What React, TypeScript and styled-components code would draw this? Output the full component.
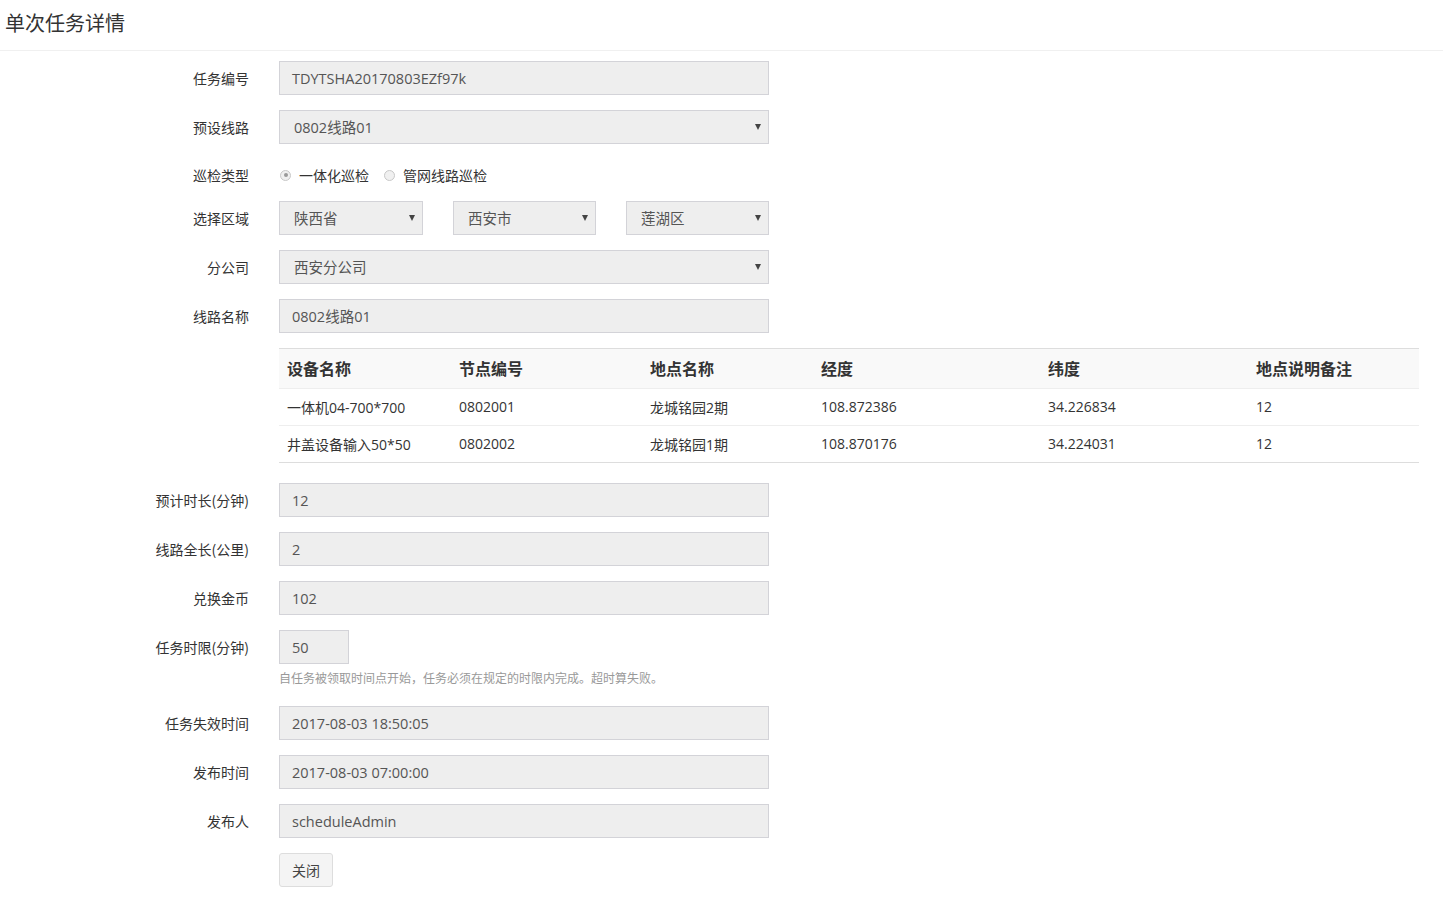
import React from "react";
import styled, { createGlobalStyle } from "styled-components";

const GlobalStyle = createGlobalStyle`
  html, body { margin: 0; padding: 0; background: #fff; }
  body {
    font-family: "Open Sans", "Noto Sans CJK SC", sans-serif;
    color: #333;
    font-size: 14px;
  }
`;

const Page = styled.div`
  width: 1443px;
  min-height: 902px;
`;

const Header = styled.div`
  height: 51px;
  display: flex;
  align-items: center;
  padding: 0 5px 6px;
  box-sizing: border-box;
  border-bottom: 1px solid #f0f0f0;
`;

const Title = styled.h1`
  margin: 0;
  font-size: 20px;
  font-weight: 400;
  color: #333;
  font-family: "Noto Sans CJK SC", sans-serif;
`;

const Form = styled.div`
  padding: 10px 24px 20px 0;
`;

const Row = styled.div<{ $mb?: number }>`
  display: grid;
  grid-template-columns: 249px 1fr;
  column-gap: 30px;
  margin-bottom: ${(p) => p.$mb ?? 15}px;
  align-items: start;
`;

const Label = styled.div<{ $h?: number }>`
  text-align: right;
  height: ${(p) => p.$h ?? 34}px;
  line-height: ${(p) => p.$h ?? 34}px;
  font-size: 14px;
  color: #333;
  font-family: "Noto Sans CJK SC", sans-serif;
`;

const Field = styled.div<{ $w?: number }>`
  width: ${(p) => p.$w ?? 490}px;
  height: 34px;
  box-sizing: border-box;
  background: #eee;
  border: 1px solid #d3d3d8;
  padding: 0 12px;
  line-height: 33px;
  color: #555;
  font-size: 14.5px;
  font-family: "Open Sans", "Noto Sans CJK SC", sans-serif;
  white-space: nowrap;
`;

const Select = styled(Field)`
  position: relative;
  padding-left: 14px;
  &::after {
    content: "";
    position: absolute;
    right: 7px;
    top: 13px;
    border-left: 3px solid transparent;
    border-right: 3px solid transparent;
    border-top: 6px solid #444;
  }
`;

const SelectGroup = styled.div`
  display: flex;
  gap: 30px;
  width: 490px;
`;

const RadioGroup = styled.div`
  display: flex;
  align-items: center;
  height: 32px;
  font-family: "Noto Sans CJK SC", sans-serif;
  font-size: 14px;
  color: #333;
`;

const RadioItem = styled.label`
  display: flex;
  align-items: center;
  margin-right: 14px;
`;

const RadioDot = styled.span<{ $checked?: boolean }>`
  width: 11px;
  height: 11px;
  border-radius: 50%;
  box-sizing: border-box;
  border: 1px solid #c8c8c8;
  background: #f0f0f0;
  margin: 0 8px 0 1px;
  position: relative;
  &::after {
    content: "";
    display: ${(p) => (p.$checked ? "block" : "none")};
    position: absolute;
    left: 2.5px;
    top: 2.5px;
    width: 4px;
    height: 4px;
    border-radius: 50%;
    background: #9a9a9a;
  }
`;

const Table = styled.table`
  width: 1140px;
  table-layout: fixed;
  border-collapse: collapse;
  border-top: 1px solid #ddd;
  border-bottom: 1px solid #ddd;
  font-family: "Open Sans", "Noto Sans CJK SC", sans-serif;
`;

const Th = styled.th<{ $w: number }>`
  width: ${(p) => p.$w}px;
  box-sizing: border-box;
  text-align: left;
  padding: 0 8px 2px;
  height: 40px;
  background: #f9f9f9;
  font-size: 16px;
  font-weight: 700;
  color: #333;
  font-family: "Noto Sans CJK SC", sans-serif;
`;

const Td = styled.td`
  padding: 0 8px 1px;
  height: 37px;
  box-sizing: border-box;
  font-size: 14px;
  color: #333;
  border-top: 1px solid #eee;
  white-space: nowrap;
`;

const Help = styled.div`
  font-size: 12px;
  color: #999;
  margin-top: 5px;
  line-height: 17px;
  font-family: "Noto Sans CJK SC", sans-serif;
`;

const Button = styled.button`
  height: 34px;
  width: 54px;
  box-sizing: border-box;
  background: #f4f4f4;
  border: 1px solid #ddd;
  border-radius: 3px;
  color: #444;
  font-size: 14px;
  font-family: "Noto Sans CJK SC", sans-serif;
  padding: 0;
  cursor: pointer;
`;

const columns = [
  { title: "设备名称", w: 172 },
  { title: "节点编号", w: 191 },
  { title: "地点名称", w: 171 },
  { title: "经度", w: 227 },
  { title: "纬度", w: 208 },
  { title: "地点说明备注", w: 171 },
];

const points = [
  ["一体机04-700*700", "0802001", "龙城铭园2期", "108.872386", "34.226834", "12"],
  ["井盖设备输入50*50", "0802002", "龙城铭园1期", "108.870176", "34.224031", "12"],
];

export default function App() {
  return (
    <Page>
      <GlobalStyle />
      <Header>
        <Title>单次任务详情</Title>
      </Header>
      <Form>
        <Row>
          <Label>任务编号</Label>
          <Field>TDYTSHA20170803EZf97k</Field>
        </Row>
        <Row>
          <Label>预设线路</Label>
          <Select>0802线路01</Select>
        </Row>
        <Row $mb={10}>
          <Label $h={32}>巡检类型</Label>
          <RadioGroup>
            <RadioItem>
              <RadioDot $checked />
              一体化巡检
            </RadioItem>
            <RadioItem>
              <RadioDot />
              管网线路巡检
            </RadioItem>
          </RadioGroup>
        </Row>
        <Row>
          <Label>选择区域</Label>
          <SelectGroup>
            <Select $w={144}>陕西省</Select>
            <Select $w={143}>西安市</Select>
            <Select $w={143}>莲湖区</Select>
          </SelectGroup>
        </Row>
        <Row>
          <Label>分公司</Label>
          <Select>西安分公司</Select>
        </Row>
        <Row>
          <Label>线路名称</Label>
          <Field>0802线路01</Field>
        </Row>
        <Row $mb={20}>
          <div />
          <Table>
            <thead>
              <tr>
                {columns.map((c) => (
                  <Th key={c.title} $w={c.w}>
                    {c.title}
                  </Th>
                ))}
              </tr>
            </thead>
            <tbody>
              {points.map((r) => (
                <tr key={r[1]}>
                  {r.map((v, i) => (
                    <Td key={i}>{v}</Td>
                  ))}
                </tr>
              ))}
            </tbody>
          </Table>
        </Row>
        <Row>
          <Label>预计时长(分钟)</Label>
          <Field>12</Field>
        </Row>
        <Row>
          <Label>线路全长(公里)</Label>
          <Field>2</Field>
        </Row>
        <Row>
          <Label>兑换金币</Label>
          <Field>102</Field>
        </Row>
        <Row $mb={20}>
          <Label>任务时限(分钟)</Label>
          <div>
            <Field $w={70}>50</Field>
            <Help>自任务被领取时间点开始，任务必须在规定的时限内完成。超时算失败。</Help>
          </div>
        </Row>
        <Row>
          <Label>任务失效时间</Label>
          <Field>2017-08-03 18:50:05</Field>
        </Row>
        <Row>
          <Label>发布时间</Label>
          <Field>2017-08-03 07:00:00</Field>
        </Row>
        <Row>
          <Label>发布人</Label>
          <Field>scheduleAdmin</Field>
        </Row>
        <Row>
          <div />
          <div>
            <Button>关闭</Button>
          </div>
        </Row>
      </Form>
    </Page>
  );
}
